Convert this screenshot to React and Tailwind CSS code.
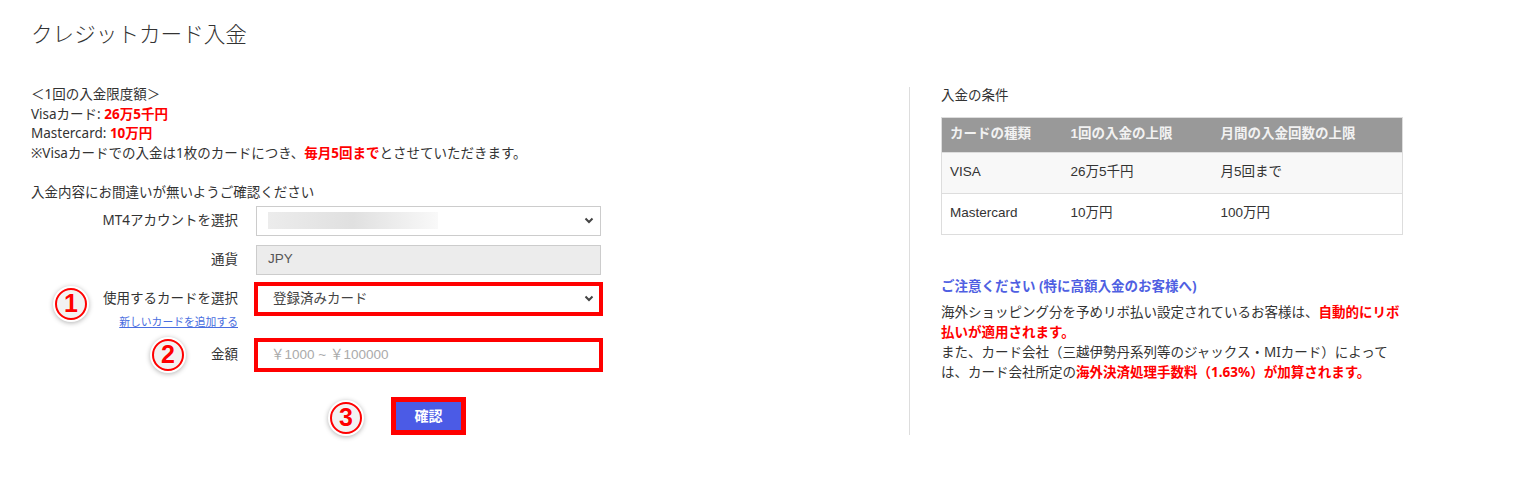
import React from 'react';

function Chevron() {
  return (
    <svg width="10" height="7" viewBox="0 0 10 7" className="shrink-0">
      <path d="M1.5 1.5l3.5 3.5 3.5-3.5" fill="none" stroke="#444" strokeWidth="2" />
    </svg>
  );
}

function Marker({ n, className }) {
  return (
    <div
      className={`absolute flex h-[32px] w-[32px] items-center justify-center rounded-full border-[2px] border-[#ff0000] bg-[#f2f2f2] shadow-[0_0_0_2px_#fff,0_1px_5px_2px_rgba(0,0,0,0.3)] ${className}`}
    >
      <span className="font-['Liberation_Sans',sans-serif] text-[25px] leading-none font-bold text-[#ff0000] [text-shadow:0_0_2px_#fff]">
        {n}
      </span>
    </div>
  );
}

const rows = [
  { card: 'VISA', limit: '26万5千円', count: '月5回まで' },
  { card: 'Mastercard', limit: '10万円', count: '100万円' },
];

export default function App() {
  return (
    <div className="min-h-screen bg-white font-['Noto_Sans','Noto_Sans_CJK_JP',sans-serif] text-[13.5px] text-[#333]">
      <h1 className="pt-[18px] pl-[31px] font-['Noto_Sans_CJK_JP',sans-serif] text-[21.6px] leading-[30px] font-light text-[#333]">
        クレジットカード入金
      </h1>

      <div className="mt-[37px] flex">
        {/* left: form */}
        <div className="w-[909px] shrink-0 pl-[31px] pb-[5px]">
          <div className="leading-[19.5px]">
            <p>＜1回の入金限度額＞</p>
            <p>
              Visaカード: <span className="font-bold text-[#ff0000]">26万5千円</span>
            </p>
            <p>
              Mastercard: <span className="font-bold text-[#ff0000]">10万円</span>
            </p>
            <p>
              ※Visaカードでの入金は1枚のカードにつき、
              <span className="font-bold text-[#ff0000]">毎月5回まで</span>
              とさせていただきます。
            </p>
          </div>

          <p className="mt-[20px] leading-[19.5px]">入金内容にお間違いが無いようご確認ください</p>

          <div className="mt-[3px] flex items-center gap-[18px]">
            <div className="w-[207px] text-right">MT4アカウントを選択</div>
            <div className="flex h-[30px] w-[345px] items-center justify-between border border-[#ccc] bg-white pr-[6px] pl-[11px]">
              <div className="h-[17px] w-[170px] bg-linear-to-r from-[#ececec] via-[#e0e0e0] to-[#f9f9f9]" />
              <Chevron />
            </div>
          </div>

          <div className="mt-[9px] flex items-center gap-[18px]">
            <div className="w-[207px] text-right">通貨</div>
            <div className="flex h-[30px] w-[345px] items-center border border-[#ccc] bg-[#ececec] px-[11px] font-['Liberation_Sans',sans-serif] text-[#555]">
              JPY
            </div>
          </div>

          <div className="relative mt-[9px] flex items-start gap-[18px]">
            <Marker n="1" className="top-[4px] left-[24px]" />
            <div className="w-[207px] text-right">
              <div className="flex h-[30px] items-center justify-end">使用するカードを選択</div>
              <a href="#" className="block pt-[1px] text-[10.8px] leading-[14px] text-[#4a6ee0] underline">
                新しいカードを追加する
              </a>
            </div>
            <div className="flex h-[30px] w-[345px] items-center justify-between border border-[#ccc] bg-white pr-[6px] pl-[16px] text-[#444] outline-[4px] outline-offset-[-2px] outline-[#ff0000] outline-solid">
              <span>登録済みカード</span>
              <Chevron />
            </div>
          </div>

          <div className="relative mt-[11px] flex items-center gap-[18px]">
            <Marker n="2" className="top-[-1px] left-[121px]" />
            <div className="w-[207px] text-right">金額</div>
            <input
              type="text"
              placeholder="￥1000 ~ ￥100000"
              className="h-[30px] w-[345px] border border-[#ccc] bg-white px-[14px] font-['Liberation_Sans','Noto_Sans_CJK_JP',sans-serif] text-[13.5px] text-[#333] outline-[4px] outline-offset-[-2px] outline-[#ff0000] outline-solid placeholder:text-[#aaa]"
            />
          </div>

          <div className="relative mt-[32px] flex gap-[18px]">
            <Marker n="3" className="top-[0px] left-[299px]" />
            <div className="w-[207px]" />
            <div className="flex w-[345px] justify-center">
              <button
                type="button"
                className="h-[28px] w-[65px] bg-[#4b5be6] text-[14px] font-bold text-white outline-[5px] outline-[#ff0000] outline-solid"
              >
                確認
              </button>
            </div>
          </div>
        </div>

        {/* right: conditions */}
        <div className="mt-[2px] border-l border-[#ddd] pl-[31px]">
          <p className="mt-[-1px] leading-[19.5px]">入金の条件</p>
          <table className="mt-[11px] w-[462px] border-collapse border border-[#ddd] text-left font-['Liberation_Sans','Noto_Sans_CJK_JP',sans-serif]">
            <thead>
              <tr className="h-[35px] bg-[#999] text-[#f2f2f2]">
                <th className="w-[121px] pl-[8px] font-bold">カードの種類</th>
                <th className="w-[150px] pl-[8px] font-bold">1回の入金の上限</th>
                <th className="pl-[8px] font-bold">月間の入金回数の上限</th>
              </tr>
            </thead>
            <tbody>
              {rows.map((r, i) => (
                <tr key={r.card} className={`h-[41px] border-t border-[#ddd] ${i === 0 ? 'bg-[#f8f8f8]' : 'bg-white'}`}>
                  <td className="pl-[8px]">{r.card}</td>
                  <td className="pl-[8px]">{r.limit}</td>
                  <td className="pl-[8px]">{r.count}</td>
                </tr>
              ))}
            </tbody>
          </table>

          <p className="mt-[41px] leading-[20px] font-bold text-[#4f5fe2]">ご注意ください (特に高額入金のお客様へ)</p>
          <p className="mt-[6px] w-[475px] leading-[20px]">
            海外ショッピング分を予めリボ払い設定されているお客様は、
            <span className="font-bold text-[#ff0000]">
              自動的にリボ
              <br />
              払いが適用されます。
            </span>
            <br />
            また、カード会社（三越伊勢丹系列等のジャックス・MIカード）によって
            <br />
            は、カード会社所定の
            <span className="font-bold text-[#ff0000]">海外決済処理手数料（1.63%）が加算されます。</span>
          </p>
        </div>
      </div>
    </div>
  );
}
